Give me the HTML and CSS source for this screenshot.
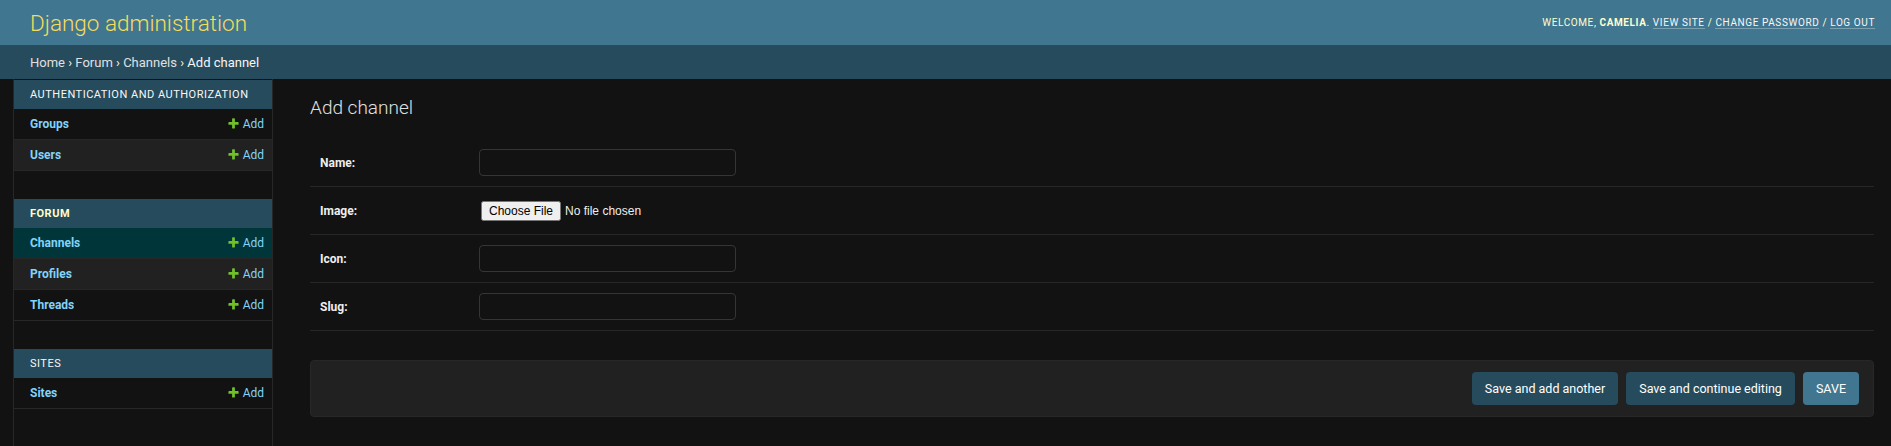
FILE: index.html
```html
<!DOCTYPE html>
<html lang="en">
<head>
<meta charset="utf-8">
<title>Add channel | Django site admin</title>
<link rel="stylesheet" href="styles.css">
</head>
<body>
<header class="header">
  <div class="branding"><a class="site-name" href="#">Django administration</a></div>
  <div class="user-tools">Welcome, <strong>Camelia</strong>. <a href="#">View site</a> / <a href="#">Change password</a> / <a href="#">Log out</a></div>
</header>
<nav class="breadcrumbs"><a href="#">Home</a> › <a href="#">Forum</a> › <a href="#">Channels</a> › Add channel</nav>
<div class="main">
  <div class="toggle"></div>
  <nav class="sidebar">
    <div class="module">
      <div class="caption">Authentication and Authorization</div>
      <div class="row"><a class="model" href="#">Groups</a><a class="addlink" href="#"><svg class="plus" viewBox="0 0 1792 1792"><path d="M1600 796v192q0 40-28 68t-68 28h-416v416q0 40-28 68t-68 28h-192q-40 0-68-28t-28-68v-416h-416q-40 0-68-28t-28-68v-192q0-40 28-68t68-28h416v-416q0-40 28-68t68-28h192q40 0 68 28t28 68v416h416q40 0 68 28t28 68z"/></svg>Add</a></div>
      <div class="row alt"><a class="model" href="#">Users</a><a class="addlink" href="#"><svg class="plus" viewBox="0 0 1792 1792"><path d="M1600 796v192q0 40-28 68t-68 28h-416v416q0 40-28 68t-68 28h-192q-40 0-68-28t-28-68v-416h-416q-40 0-68-28t-28-68v-192q0-40 28-68t68-28h416v-416q0-40 28-68t68-28h192q40 0 68 28t28 68v416h416q40 0 68 28t28 68z"/></svg>Add</a></div>
    </div>
    <div class="module">
      <div class="caption current">Forum</div>
      <div class="row selected"><a class="model" href="#">Channels</a><a class="addlink" href="#"><svg class="plus" viewBox="0 0 1792 1792"><path d="M1600 796v192q0 40-28 68t-68 28h-416v416q0 40-28 68t-68 28h-192q-40 0-68-28t-28-68v-416h-416q-40 0-68-28t-28-68v-192q0-40 28-68t68-28h416v-416q0-40 28-68t68-28h192q40 0 68 28t28 68v416h416q40 0 68 28t28 68z"/></svg>Add</a></div>
      <div class="row alt"><a class="model" href="#">Profiles</a><a class="addlink" href="#"><svg class="plus" viewBox="0 0 1792 1792"><path d="M1600 796v192q0 40-28 68t-68 28h-416v416q0 40-28 68t-68 28h-192q-40 0-68-28t-28-68v-416h-416q-40 0-68-28t-28-68v-192q0-40 28-68t68-28h416v-416q0-40 28-68t68-28h192q40 0 68 28t28 68v416h416q40 0 68 28t28 68z"/></svg>Add</a></div>
      <div class="row"><a class="model" href="#">Threads</a><a class="addlink" href="#"><svg class="plus" viewBox="0 0 1792 1792"><path d="M1600 796v192q0 40-28 68t-68 28h-416v416q0 40-28 68t-68 28h-192q-40 0-68-28t-28-68v-416h-416q-40 0-68-28t-28-68v-192q0-40 28-68t68-28h416v-416q0-40 28-68t68-28h192q40 0 68 28t28 68v416h416q40 0 68 28t28 68z"/></svg>Add</a></div>
    </div>
    <div class="module">
      <div class="caption">Sites</div>
      <div class="row"><a class="model" href="#">Sites</a><a class="addlink" href="#"><svg class="plus" viewBox="0 0 1792 1792"><path d="M1600 796v192q0 40-28 68t-68 28h-416v416q0 40-28 68t-68 28h-192q-40 0-68-28t-28-68v-416h-416q-40 0-68-28t-28-68v-192q0-40 28-68t68-28h416v-416q0-40 28-68t68-28h192q40 0 68 28t28 68v416h416q40 0 68 28t28 68z"/></svg>Add</a></div>
    </div>
  </nav>
  <main class="content">
    <h1 class="title">Add channel</h1>
    <form class="form">
      <div class="fieldset">
        <div class="form-row"><label class="label" for="id_name">Name:</label><input class="text-input" id="id_name" type="text"></div>
        <div class="form-row"><label class="label" for="id_image">Image:</label><input class="file-input" id="id_image" type="file"></div>
        <div class="form-row"><label class="label" for="id_icon">Icon:</label><input class="text-input" id="id_icon" type="text"></div>
        <div class="form-row"><label class="label" for="id_slug">Slug:</label><input class="text-input" id="id_slug" type="text"></div>
      </div>
      <div class="submit-row">
        <button class="btn" type="button">Save and add another</button>
        <button class="btn" type="button">Save and continue editing</button>
        <button class="btn btn-default" type="button">SAVE</button>
      </div>
    </form>
  </main>
</div>
</body>
</html>
```

FILE: styles.css
```css
* { box-sizing: border-box; }

html, body {
  margin: 0;
  padding: 0;
  height: 100%;
}

body {
  background: #121212;
  color: #eeeeee;
  font-family: Roboto, "Liberation Sans", Arial, sans-serif;
  font-size: 12px;
  display: flex;
  flex-direction: column;
}

a { text-decoration: none; }

.header {
  height: 45px;
  flex: 0 0 45px;
  background: #417690;
  display: flex;
  align-items: center;
  justify-content: space-between;
  padding: 0 16px 0 30px;
}

.site-name {
  font-size: 22.5px;
  font-weight: 300;
  color: #f5dd5d;
  line-height: 26px;
}

.user-tools {
  font-size: 10px;
  letter-spacing: 0.6px;
  text-transform: uppercase;
  color: #ffffcc;
  line-height: 14px;
  padding-top: 1px;
}

.user-tools strong {
  font-weight: 700;
}

.user-tools a {
  color: #f7f7f7;
  border-bottom: 1px solid rgba(255, 255, 255, 0.3);
}

.breadcrumbs {
  flex: 0 0 34px;
  height: 34px;
  background: #264b5d;
  color: #f7f7f7;
  padding: 0 30px;
  display: flex;
  align-items: center;
  white-space: pre;
  font-size: 13px;
}

.breadcrumbs a {
  color: #e0e0e0;
}

.main {
  flex: 1 1 auto;
  display: flex;
}

.toggle {
  flex: 0 0 14px;
  border-right: 1px solid #272727;
}

.sidebar {
  flex: 0 0 259px;
  border-right: 1px solid #272727;
  padding-top: 1px;
}

.module {
  margin-bottom: 28px;
}

.caption {
  height: 29px;
  display: flex;
  align-items: center;
  padding: 0 16px;
  background: #264b5d;
  color: #f7f7f7;
  font-size: 11px;
  letter-spacing: 0.5px;
  text-transform: uppercase;
}

.caption.current {
  color: #ffffcc;
  font-weight: 700;
}

.row {
  height: 31px;
  display: flex;
  align-items: center;
  justify-content: space-between;
  padding: 0 8px 0 16px;
  border-bottom: 1px solid #272727;
}

.row.alt { background: #212121; }
.row.selected { background: #00363a; }

.model {
  color: #81d4fa;
  font-weight: 700;
  font-size: 12px;
}

.addlink {
  color: #81d4fa;
  font-size: 12px;
  display: flex;
  align-items: center;
}

.plus {
  width: 13px;
  height: 13px;
  fill: #70bf2b;
  margin-right: 3px;
  margin-top: -1px;
}

.content {
  flex: 1 1 auto;
  padding: 17px 17px 0 37px;
}

.title {
  margin: 0 0 19px;
  font-size: 19px;
  font-weight: 300;
  line-height: 24px;
  color: #e0e0e0;
}

.form-row {
  height: 48px;
  display: flex;
  align-items: center;
  padding: 0 10px;
  border-bottom: 1px solid #272727;
}

.label {
  width: 159px;
  font-weight: 700;
  font-size: 12px;
  color: #eeeeee;
}

.text-input {
  width: 257px;
  height: 27px;
  background: #121212;
  border: 1px solid #353535;
  border-radius: 4px;
  color: #eeeeee;
  padding: 5px 6px;
  font-family: inherit;
  font-size: 13px;
  margin-top: -1px;
}

.file-input {
  color: #eeeeee;
  font-family: "Liberation Sans", Arial, sans-serif;
  font-size: 12px;
  margin-left: 2px;
}

.submit-row {
  margin-top: 29px;
  height: 57px;
  background: #212121;
  border: 1px solid #272727;
  border-radius: 4px;
  display: flex;
  justify-content: flex-end;
  align-items: center;
  gap: 8px;
  padding: 0 14px;
}

.btn {
  height: 33px;
  padding: 0 13px;
  background: #264b5d;
  color: #ffffff;
  border: none;
  border-radius: 4px;
  font-family: inherit;
  font-size: 12.5px;
  cursor: pointer;
}

.btn-default {
  background: #417690;
}
```
